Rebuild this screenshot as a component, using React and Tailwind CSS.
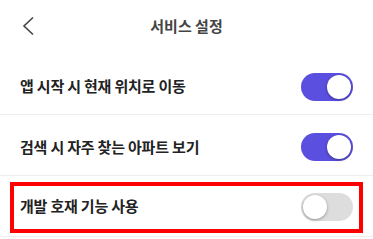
import React, { useState } from 'react';

const Toggle = ({ on, onClick }) => (
    <button
        type="button"
        onClick={onClick}
        className={`relative w-[52px] h-[28px] rounded-full shrink-0 ${on ? 'bg-[#5a4fdf]' : 'bg-[#dddddd]'}`}
    >
        <span
            className={`absolute top-[2px] w-[24px] h-[24px] rounded-full bg-white shadow-[0_1px_3px_rgba(0,0,0,0.35)] ${on ? 'left-[26px]' : 'left-[2px]'}`}
        />
    </button>
);

const Row = ({ label, on, onClick, className = '' }) => (
    <div className={`flex items-center justify-between px-5 border-b border-[#eeeeee] ${className}`}>
        <span className="text-[15px] font-bold text-[#222222] tracking-[-0.2px]">{label}</span>
        <Toggle on={on} onClick={onClick} />
    </div>
);

const App = () => {
    const [settings, setSettings] = useState({ start: true, search: true, dev: false });

    const flip = (key) => setSettings({ ...settings, [key]: !settings[key] });

    return (
        <div
            className="w-[373px] h-[239px] bg-white overflow-hidden"
            style={{ fontFamily: '"Noto Sans CJK KR", "Noto Sans", sans-serif' }}
        >
            <div className="relative h-[60px] flex items-start justify-center pt-[15px]">
                <svg className="absolute left-[22px] top-[16px]" width="13" height="20" viewBox="0 0 13 20">
                    <polyline points="11,1.5 2,10 11,18.5" fill="none" stroke="#444444" strokeWidth="1.6" />
                </svg>
                <span className="text-[15px] font-semibold text-[#444444] leading-[22px]">서비스 설정</span>
            </div>
            <Row className="h-[55px] pb-[1px]" label="앱 시작 시 현재 위치로 이동" on={settings.start} onClick={() => flip('start')} />
            <Row className="h-[61px] pt-[4px]" label="검색 시 자주 찾는 아파트 보기" on={settings.search} onClick={() => flip('search')} />
            <div className="relative">
                <Row className="h-[61px] pt-[1px]" label="개발 호재 기능 사용" on={settings.dev} onClick={() => flip('dev')} />
                {/* 강조 표시 */}
                <div className="absolute left-[10px] right-[10px] top-[6px] h-[51px] border-4 border-[#ff0000] pointer-events-none" />
            </div>
        </div>
    );
};

export default App;
